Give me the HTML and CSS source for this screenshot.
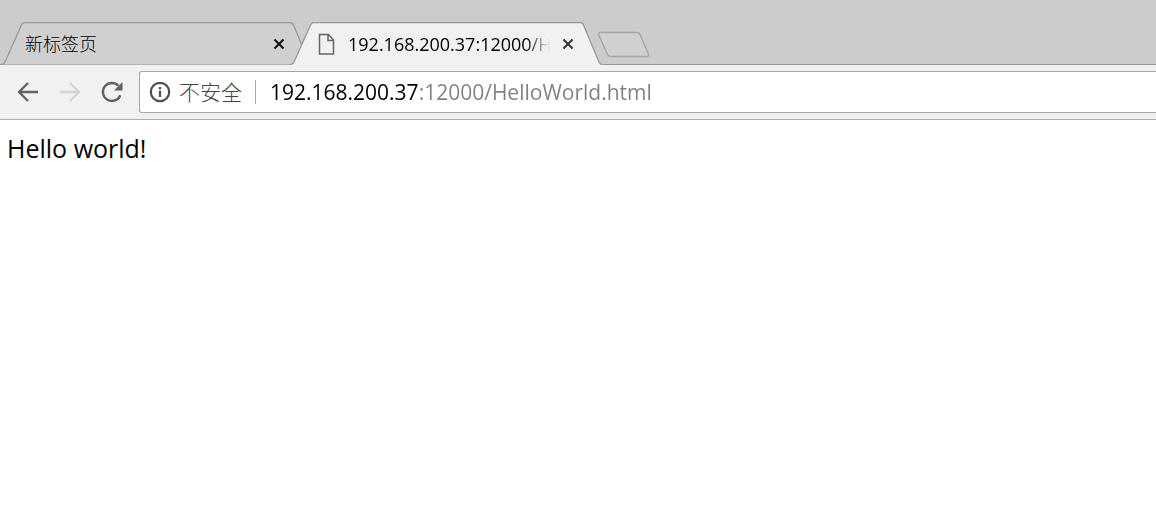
FILE: index.html
```html
<!DOCTYPE html>
<html lang="zh-CN">
<head>
<meta charset="utf-8">
<title>192.168.200.37:12000/HelloWorld.html</title>
<link rel="stylesheet" href="styles.css">
</head>
<body>
<header class="browser">
  <div class="tab-strip" role="tablist">
    <div class="tab">
      <svg class="tab-shape" viewBox="0 0 312 43" aria-hidden="true"><path d="M0 42.5Q3 42.5 4 40L20.500 3Q21.500 .5 24 .5H289Q291.500 .5 292.500 3L308 40Q309 42.500 312 42.500" fill="#d0d0d0" stroke="#999" stroke-width="1.300"/></svg>
      <button class="tab-title" role="tab" aria-selected="false">新标签页</button>
      <button class="tab-close" aria-label="关闭"><svg viewBox="0 0 20 20"><path d="M5.500 5.500l9 9m0-9l-9 9" stroke="#111" stroke-width="2"/></svg></button>
    </div>
    <div class="tab active">
      <svg class="tab-shape" viewBox="0 0 312 43" aria-hidden="true"><path d="M0 43V42.500Q3 42.500 4 40L20.500 3Q21.500 .5 24 .5H290Q292.500 .5 293.500 3L309 40Q310 42.500 312 42.500V43Z" fill="#f1f1f1"/><path d="M0 42.500Q3 42.500 4 40L20.500 3Q21.500 .5 24 .5H290Q292.500 .5 293.500 3L309 40Q310 42.500 312 42.500" fill="none" stroke="#999" stroke-width="1.300"/></svg>
      <svg class="tab-icon" viewBox="0 0 24 24" aria-hidden="true"><path d="M5.500 2.500h9l5 5.500v14h-14zM14 3v5.500h5.500" fill="none" stroke="#666" stroke-width="1.500"/></svg>
      <button class="tab-title" role="tab" aria-selected="true">192.168.200.37:12000/HelloWorld.html</button>
      <button class="tab-close" aria-label="关闭"><svg viewBox="0 0 20 20"><path d="M5.500 5.500l9 9m0-9l-9 9" stroke="#333" stroke-width="2"/></svg></button>
    </div>
    <button class="new-tab" aria-label="新建标签页"><svg viewBox="0 0 54 28"><path d="M4 2.500H40Q42 2.500 43 4.500L51 23Q52.500 26.500 50 26.500H14Q11.500 26.500 10.500 24.500L2 5.500Q.8 2.500 4 2.500Z" fill="#d0d0d0" stroke="#a5a5a5" stroke-width="1.400"/></svg></button>
  </div>
  <nav class="toolbar">
    <button class="tool" aria-label="后退"><svg viewBox="0 0 24 24"><path d="M22 12H4M12 3l-9 9 9 9" fill="none" stroke="#5f6368" stroke-width="2.300"/></svg></button>
    <button class="tool" aria-label="前进" disabled><svg viewBox="0 0 24 24"><path d="M2 12h18M12 3l9 9-9 9" fill="none" stroke="#d3d3d3" stroke-width="2.300"/></svg></button>
    <button class="tool" aria-label="重新加载"><svg viewBox="0 0 24 24"><path d="M20.300 15.200A9 9 0 1 1 18.500 5.800" fill="none" stroke="#5f6368" stroke-width="2.400"/><path d="M22.500 2v8.500H14z" fill="#5f6368"/></svg></button>
    <div class="omnibox">
      <button class="security"><svg viewBox="0 0 24 24" aria-hidden="true"><circle cx="12" cy="12" r="9.200" fill="none" stroke="#4d4d4d" stroke-width="2.200"/><path d="M12 10.800V17M12 7v2.300" stroke="#4d4d4d" stroke-width="2.200"/></svg><span>不安全</span></button>
      <input class="url" type="text" aria-label="地址" value="192.168.200.37:12000/HelloWorld.html" spellcheck="false">
    </div>
  </nav>
</header>
<main class="page">Hello world!</main>
</body>
</html>
```
FILE: styles.css
```css
* { box-sizing: border-box; }
body {
  margin: 0;
  background: #fff;
  color: #000;
  font-family: "Open Sans", "Noto Sans CJK SC", sans-serif;
}
button {
  margin: 0;
  padding: 0;
  border: 0;
  background: none;
  color: inherit;
  font: inherit;
}
svg { display: block; width: 100%; height: 100%; }
.tab-strip {
  display: flex;
  padding: 22px 0 0 1px;
  background: linear-gradient(#999, #999) bottom / 100% 1px no-repeat #ccc;
}
.tab {
  position: relative;
  display: flex;
  align-items: center;
  width: 312px;
  height: 43px;
  padding: 0 24px;
}
.tab.active { margin-left: -23px; }
.tab-shape { position: absolute; inset: 0; }
.tab-icon { position: relative; flex: none; width: 24px; height: 24px; margin-right: 10px; }
.tab-title {
  position: relative;
  flex: 1;
  min-width: 0;
  overflow: hidden;
  font-size: 18px;
  font-weight: 300;
  line-height: 24px;
  text-align: left;
  white-space: nowrap;
}
.active .tab-title {
  font-weight: 400;
  mask-image: linear-gradient(to left, transparent, #000 24px);
}
.tab-close { position: relative; flex: none; width: 20px; height: 20px; margin-left: 8px; }
.new-tab { align-self: center; width: 54px; height: 28px; margin-left: -5px; }
.toolbar {
  display: flex;
  align-items: center;
  gap: 18px;
  padding: 6px 0 6px 16px;
  background: #f1f1f1;
  border-bottom: 1px solid #aeaeae;
}
.tool { flex: none; width: 24px; height: 24px; }
.omnibox {
  display: flex;
  align-items: center;
  flex: 1;
  min-width: 0;
  height: 42px;
  margin-left: -3px;
  padding-left: 8px;
  background: #fff;
  border: 1px solid #a6a6a6;
  border-right: 0;
  border-radius: 3px 0 0 3px;
}
.security {
  display: flex;
  align-items: center;
  flex: none;
  gap: 7px;
  height: 24px;
  padding-right: 13px;
  border-right: 1px solid #a6a6a6;
  color: #444;
  font-size: 21px;
  font-weight: 300;
  line-height: 24px;
}
.security svg { width: 24px; height: 24px; }
.url {
  flex: 1;
  min-width: 0;
  height: 32px;
  margin-left: 14px;
  padding: 0;
  border: 0;
  outline: 0;
  background: linear-gradient(to right, #000 149px, #808080 149px);
  background-clip: text;
  color: transparent;
  caret-color: #000;
  font: 21px "Open Sans", sans-serif;
}
.page { padding: 10px 7px; font-size: 25px; line-height: 36px; }
```
